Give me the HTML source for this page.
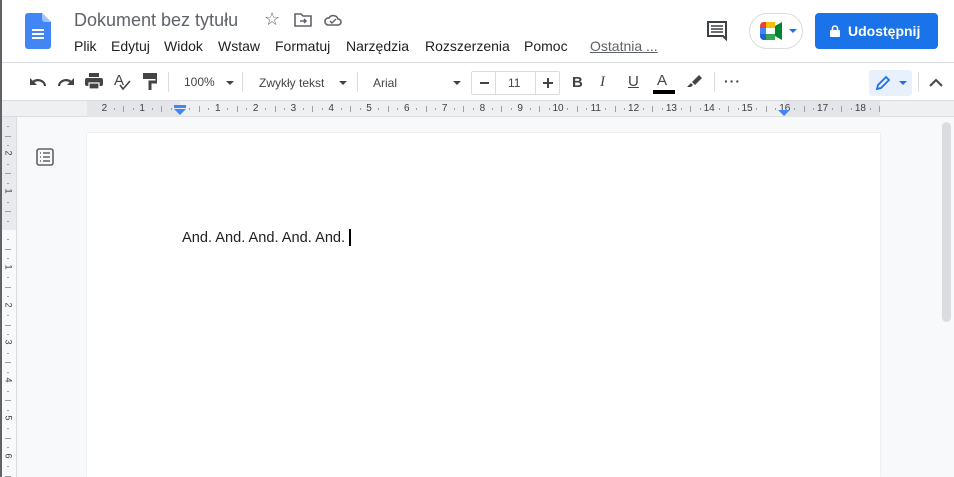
<!DOCTYPE html>
<html><head><meta charset="utf-8"><style>
*{box-sizing:border-box;margin:0;padding:0}
html,body{width:954px;height:477px;overflow:hidden}
body{background:#f8f9fa;font-family:"Liberation Sans",Arial,sans-serif;position:relative;color:#3c4043}
.abs{position:absolute}
#top{left:0;top:0;width:954px;height:63px;background:#fff;border-bottom:1px solid #dadce0}
#tb{left:0;top:63px;width:954px;height:38px;background:#fff;border-bottom:1px solid #dadce0}
#ruler{left:0;top:101px;width:954px;height:16px;background:#eef0f2;border-bottom:1px solid #dadce0}
.menu span{position:absolute;top:38px;font-size:14px;color:#202124}
.rn{position:absolute;top:103px;font-size:10px;color:#3c4043;transform:translateX(-50%)}
.tk{position:absolute;top:106px;width:1px;height:6px;background:#9aa0a6}
.dt{position:absolute;top:108px;width:1px;height:2px;background:#9aa0a6}
.vr{position:absolute;left:6px;font-size:9px;color:#3c4043;transform:rotate(90deg)}
.sep{position:absolute;top:72px;width:1px;height:20px;background:#dadce0}
</style></head><body>
<div id="top" class="abs">
 <svg class="abs" style="left:25px;top:13px" width="26" height="36" viewBox="0 0 26 36"><path d="M3 0h14l9 9v24a3 3 0 0 1-3 3H3a3 3 0 0 1-3-3V3a3 3 0 0 1 3-3z" fill="#4285f4"/><path d="M17 0v6a3 3 0 0 0 3 3h6z" fill="#a1c2fa"/><rect x="7" y="16" width="12" height="2" fill="#fff"/><rect x="7" y="20" width="12" height="2" fill="#fff"/><rect x="7" y="24" width="12" height="2" fill="#fff"/></svg>
 <div class="abs" style="left:74px;top:10px;font-size:18px;color:#5f6368">Dokument bez tytułu</div>
 <div class="abs" style="left:264px;top:9px;font-size:18px;color:#5f6368">☆</div>
 <svg class="abs" style="left:294px;top:13px" width="18" height="14" viewBox="0 0 18 14"><path d="M1 1h6l2 2h8v10H1z" fill="none" stroke="#5f6368" stroke-width="1.6"/><path d="M6 8h6M10 6l2 2-2 2" fill="none" stroke="#5f6368" stroke-width="1.5"/></svg>
 <svg class="abs" style="left:324px;top:13px" width="18" height="14" viewBox="0 0 18 14"><path d="M4 12h10a3 3 0 0 0 0-6 5 5 0 0 0-9-1 3.5 3.5 0 0 0-1 7z" fill="none" stroke="#5f6368" stroke-width="1.6"/><path d="M6 8l2 2 4-4" fill="none" stroke="#5f6368" stroke-width="1.4"/></svg>
 <div class="menu"><span style="left:74px">Plik</span><span style="left:111px">Edytuj</span><span style="left:164px">Widok</span><span style="left:218px">Wstaw</span><span style="left:275px">Formatuj</span><span style="left:346px">Narzędzia</span><span style="left:425px">Rozszerzenia</span><span style="left:524px">Pomoc</span><span style="left:590px;color:#5f6368;text-decoration:underline">Ostatnia ...</span></div>
 <svg class="abs" style="left:706px;top:20px" width="22" height="22" viewBox="0 0 22 22"><path d="M2 2h18v17l-3-3H2z" fill="none" stroke="#3c4043" stroke-width="2"/><path d="M5 6h12M5 9h12M5 12h12" stroke="#3c4043" stroke-width="1.6"/></svg>
 <div class="abs" style="left:749px;top:13px;width:54px;height:36px;border:1px solid #dadce0;border-radius:18px"></div>
 <svg class="abs" style="left:760px;top:22px" width="26" height="18" viewBox="0 0 26 18"><path d="M4 0h11v6H6V18H4a4 4 0 0 1-4-4V4a4 4 0 0 1 4-4z" fill="#ea4335"/><path d="M0 6h6v6H0z" fill="#4285f4"/><path d="M0 12h6v6H4a4 4 0 0 1-4-4z" fill="#1967d2"/><path d="M6 12h9v6H6z" fill="#34a853"/><path d="M6 0h9v6H6z" fill="#fbbc04"/><path d="M15 4l7-4v18l-7-4z" fill="#00832d"/><rect x="9" y="6" width="6" height="6" fill="#fff"/></svg>
 <div class="abs" style="left:789px;top:29px;width:0;height:0;border-left:4px solid transparent;border-right:4px solid transparent;border-top:4px solid #1a73e8"></div>
 <div class="abs" style="left:815px;top:13px;width:123px;height:36px;background:#1a73e8;border-radius:4px;color:#fff;font-size:14px;font-weight:bold;line-height:36px;padding-left:33px">Udostępnij</div>
 <svg class="abs" style="left:830px;top:25px" width="10" height="12" viewBox="0 0 10 12"><rect x="0" y="5" width="10" height="7" rx="1" fill="#fff"/><path d="M2.5 5V3.5a2.5 2.5 0 0 1 5 0V5" fill="none" stroke="#fff" stroke-width="1.6"/></svg>
</div>
<div id="tb" class="abs"></div>
 <svg class="abs" style="left:28px;top:75px" width="20" height="14" viewBox="0 0 20 14"><path d="M17 11a7 6 0 0 0-12-4" fill="none" stroke="#444" stroke-width="2.2"/><path d="M2 3v7h7z" fill="#444"/></svg>
 <svg class="abs" style="left:56px;top:75px" width="20" height="14" viewBox="0 0 20 14"><path d="M3 11a7 6 0 0 1 12-4" fill="none" stroke="#444" stroke-width="2.2"/><path d="M18 3v7h-7z" fill="#444"/></svg>
 <svg class="abs" style="left:85px;top:73px" width="18" height="17" viewBox="0 0 18 17"><rect x="4" y="0" width="10" height="4" fill="#444"/><rect x="0" y="5" width="18" height="8" rx="2" fill="#444"/><rect x="4" y="10" width="10" height="6" fill="#444" stroke="#fff" stroke-width="1.2"/></svg>
 <div class="abs" style="left:114px;top:72px;font-size:15px;color:#444">A</div>
 <svg class="abs" style="left:119px;top:80px" width="12" height="10" viewBox="0 0 12 10"><path d="M1 5l3 4 7-8" fill="none" stroke="#444" stroke-width="1.6"/></svg>
 <svg class="abs" style="left:143px;top:73px" width="14" height="17" viewBox="0 0 14 17"><rect x="0" y="0" width="14" height="6" fill="#444"/><path d="M12 3h2v6H7v8" fill="none" stroke="#444" stroke-width="3"/></svg>
 <div class="sep" style="left:168px"></div>
 <div class="abs" style="left:184px;top:75px;font-size:12px;color:#444">100%</div>
 <div class="abs" style="left:226px;top:81px;border-left:4px solid transparent;border-right:4px solid transparent;border-top:4px solid #444"></div>
 <div class="sep" style="left:242px"></div>
 <div class="abs" style="left:259px;top:76px;font-size:12px;color:#444">Zwykły tekst</div>
 <div class="abs" style="left:339px;top:81px;border-left:4px solid transparent;border-right:4px solid transparent;border-top:4px solid #444"></div>
 <div class="sep" style="left:357px"></div>
 <div class="abs" style="left:373px;top:76px;font-size:12px;color:#444">Arial</div>
 <div class="abs" style="left:453px;top:81px;border-left:4px solid transparent;border-right:4px solid transparent;border-top:4px solid #444"></div>
 <div class="abs" style="left:471px;top:71px;width:89px;height:24px;border:1px solid #dadce0;border-radius:2px"></div>
 <div class="abs" style="left:495px;top:71px;width:1px;height:24px;background:#dadce0"></div>
 <div class="abs" style="left:535px;top:71px;width:1px;height:24px;background:#dadce0"></div>
 <div class="abs" style="left:480px;top:82px;width:9px;height:2px;background:#444"></div>
 <div class="abs" style="left:508px;top:76px;font-size:12px;color:#444">11</div>
 <div class="abs" style="left:543px;top:82px;width:10px;height:2px;background:#444"></div>
 <div class="abs" style="left:547px;top:78px;width:2px;height:10px;background:#444"></div>
 <div class="abs" style="left:572px;top:74px;font-size:15px;font-weight:bold;color:#444">B</div>
 <div class="abs" style="left:600px;top:74px;font-size:15px;font-style:italic;font-family:'Liberation Serif',serif;color:#444">I</div>
 <div class="abs" style="left:628px;top:73px;font-size:15px;color:#444;text-decoration:underline">U</div>
 <div class="abs" style="left:657px;top:72px;font-size:15px;color:#444">A</div>
 <div class="abs" style="left:653px;top:90px;width:22px;height:4px;background:#000"></div>
 <svg class="abs" style="left:686px;top:74px" width="16" height="14" viewBox="0 0 16 14"><path d="M6 8l7-7 3 3-7 7z M5 9l2 2-2 2H1z" fill="#444"/></svg>
 <div class="sep" style="left:714px"></div>
 <div class="abs" style="left:724px;top:73px;font-size:14px;color:#444;letter-spacing:1px;font-weight:bold">···</div>
 <div class="abs" style="left:869px;top:70px;width:43px;height:26px;background:#e8f0fe;border-radius:3px"></div>
 <svg class="abs" style="left:875px;top:75px" width="16" height="16" viewBox="0 0 16 16"><path d="M2 14l1-4 8-8 3 3-8 8z" fill="none" stroke="#1a73e8" stroke-width="1.8"/></svg>
 <div class="abs" style="left:899px;top:81px;border-left:4px solid transparent;border-right:4px solid transparent;border-top:4px solid #1a73e8"></div>
 <div class="sep" style="left:918px"></div>
 <svg class="abs" style="left:929px;top:78px" width="14" height="9" viewBox="0 0 14 9"><path d="M1 8l6-6 6 6" fill="none" stroke="#444" stroke-width="2"/></svg>
<div id="ruler" class="abs"></div>
<div class="abs" style="left:87px;top:101px;width:93px;height:16px;background:#e3e5e8"></div>
<div class="abs" style="left:784px;top:101px;width:96px;height:16px;background:#e3e5e8"></div>
<div id="rul"></div>
<div class="abs" style="left:174px;top:105px;width:12px;height:3px;background:#4285f4"></div>
<div class="abs" style="left:174px;top:109px;border-left:6px solid transparent;border-right:6px solid transparent;border-top:6px solid #4285f4"></div>
<div class="abs" style="left:778px;top:110px;border-left:6px solid transparent;border-right:6px solid transparent;border-top:6px solid #4285f4"></div>
<div class="abs" style="left:2px;top:117px;width:14px;height:113px;background:#e8eaed"></div>
<div class="abs" style="left:16px;top:117px;width:1px;height:360px;background:#dadce0"></div>
<div id="vrul"></div>
<svg class="abs" style="left:36px;top:148px" width="18" height="18" viewBox="0 0 18 18"><rect x="1" y="1" width="16" height="16" rx="2" fill="none" stroke="#5f6368" stroke-width="1.6"/><path d="M4 5h1M7 5h7M4 9h1M7 9h7M4 13h1M7 13h7" stroke="#5f6368" stroke-width="1.6"/></svg>
<div class="abs" style="left:87px;top:133px;width:793px;height:344px;background:#fff;box-shadow:0 0 1px #c8c8c8"></div>
<div class="abs" style="left:182px;top:230px;font-size:14.6px;color:#222">And. And. And. And. And.</div>
<div class="abs" style="left:349px;top:229px;width:2px;height:17px;background:#000"></div>
<div class="abs" style="left:942px;top:122px;width:9px;height:200px;background:#dadce0;border-radius:5px"></div>
<div class="abs" style="left:0;top:0;width:2px;height:477px;background:#5f6368;z-index:5"></div>
<script>
var r=document.getElementById('rul'),h='';
var cm=37.8,z=180;
for(var i=-2;i<=18;i++){var x=z+i*cm;
 if(i!==0){var n=Math.abs(i);h+='<div class="rn" style="left:'+x+'px">'+n+'</div>';}
 if(x+cm/2<880)h+='<div class="tk" style="left:'+Math.round(x+cm/2)+'px"></div>';
 if(x+cm/4<880)h+='<div class="dt" style="left:'+Math.round(x+cm/4)+'px"></div>';
 if(x+3*cm/4<880)h+='<div class="dt" style="left:'+Math.round(x+3*cm/4)+'px"></div>';}
r.innerHTML=h;
var v=document.getElementById('vrul'),g='',vz=230;
for(var j=-3;j<=7;j++){var y=vz+j*cm;
 if(j!==0&&y>120&&y<470)g+='<div class="vr" style="top:'+(y-6)+'px">'+Math.abs(j)+'</div>';
 var y2=Math.round(y+cm/2);if(y2>117&&y2<477)g+='<div class="abs" style="left:5px;top:'+y2+'px;width:6px;height:1px;background:#9aa0a6"></div>';
 [0.25,0.75].forEach(function(f){var y3=Math.round(y+cm*f);if(y3>117&&y3<477)g+='<div class="abs" style="left:7px;top:'+y3+'px;width:2px;height:1px;background:#9aa0a6"></div>';});}
v.innerHTML=g;
</script>
</body></html>
